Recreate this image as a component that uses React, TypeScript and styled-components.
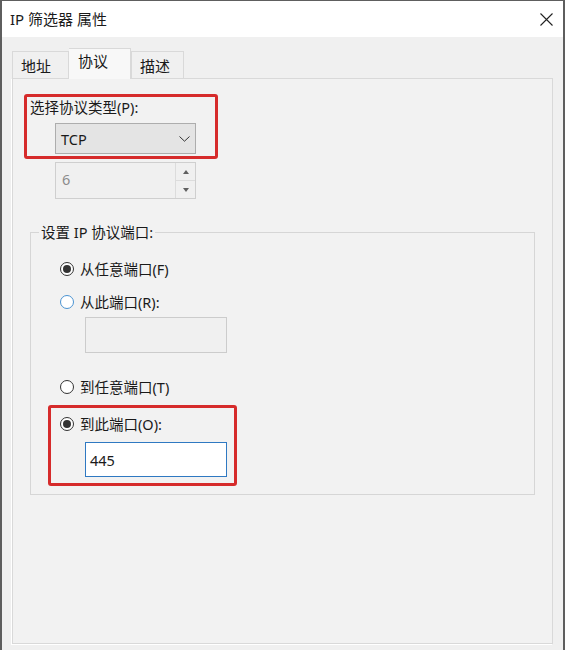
import styled, { createGlobalStyle } from "styled-components";

const GlobalStyle = createGlobalStyle`
  html, body {
    margin: 0;
    padding: 0;
    background: #f0f0f0;
  }
  * {
    box-sizing: border-box;
  }
`;

const Window = styled.div`
  width: 565px;
  height: 650px;
  display: flex;
  flex-direction: column;
  border: 2px solid #5e5e5e;
  border-top-width: 1px;
  border-bottom: none;
  background: #f0f0f0;
  font-family: "Noto Sans", "Noto Sans CJK SC", sans-serif;
  font-size: 14.5px;
  color: #1a1a1a;
`;

const TitleBar = styled.div`
  height: 36px;
  flex-shrink: 0;
  display: flex;
  align-items: center;
  justify-content: space-between;
  padding: 0 10px 0 8px;
  background: #ffffff;
`;

const Title = styled.span`
  font-size: 15px;
  line-height: 20px;
`;

const CloseButton = styled.button`
  width: 14px;
  height: 14px;
  padding: 0;
  border: none;
  background: none;
  display: flex;
  align-items: center;
  justify-content: center;
`;

const Body = styled.div`
  flex: 1;
  display: flex;
  flex-direction: column;
  padding: 11px 10px 6px 10px;
`;

const TabStrip = styled.div`
  display: flex;
  align-items: flex-end;
  height: 31px;
  position: relative;
  z-index: 1;
  margin-bottom: -1px;
`;

const Tab = styled.div<{ $active?: boolean; $width: number }>`
  width: ${(p) => p.$width}px;
  height: ${(p) => (p.$active ? 31 : 28)}px;
  padding: ${(p) => (p.$active ? "2px 0 0 9px" : "4px 0 0 8px")};
  line-height: 20px;
  font-size: 15px;
  border: 1px solid #d9d9d9;
  border-bottom: ${(p) => (p.$active ? "none" : "1px solid #d9d9d9")};
  border-left: ${(p) => (p.$active ? "none" : "1px solid #d9d9d9")};
  background: ${(p) => (p.$active ? "#f8f8f8" : "#f0f0f0")};
`;

const Panel = styled.div`
  flex: 1;
  display: flex;
  flex-direction: column;
  align-items: flex-start;
  border: 1px solid #d9d9d9;
  background: #f2f2f2;
  box-shadow: -1px 1px 0 #ffffff;
`;

const Highlight = styled.div<{ $width: number; $height: number }>`
  width: ${(p) => p.$width}px;
  height: ${(p) => p.$height}px;
  border: 3px solid #d62b2b;
  border-radius: 3px;
`;

const ProtocolBox = styled(Highlight)`
  margin: 15px 0 0 11px;
  padding: 0 0 0 3px;
`;

const Label = styled.div`
  line-height: 20px;
  height: 20px;
  white-space: nowrap;
`;

const Combo = styled.div`
  width: 141px;
  height: 31px;
  margin: 6px 0 0 25px;
  display: flex;
  align-items: center;
  justify-content: space-between;
  padding: 0 5px 0 5px;
  background: #e4e4e4;
  border: 1px solid #adadad;
`;

const Spinner = styled.div`
  width: 141px;
  height: 37px;
  margin: 3px 0 0 42px;
  display: flex;
  border: 1px solid #cfcfcf;
  background: #f0f0f0;
`;

const SpinValue = styled.div`
  flex: 1;
  padding: 6px 0 0 6px;
  line-height: 20px;
  color: #8c8c8c;
`;

const SpinButtons = styled.div`
  width: 20px;
  display: flex;
  flex-direction: column;
  border-left: 1px solid #dcdcdc;
`;

const SpinButton = styled.div<{ $down?: boolean }>`
  flex: 1;
  display: flex;
  align-items: center;
  justify-content: center;
  border-top: ${(p) => (p.$down ? "1px solid #dcdcdc" : "none")};
`;

const Group = styled.fieldset`
  width: 505px;
  margin: 23px 0 0 17px;
  padding: 0 0 8px 0;
  border: 1px solid #d6d6d6;
  min-inline-size: 0;
  display: flex;
  flex-direction: column;
  align-items: flex-start;
`;

const Legend = styled.legend`
  margin-left: 8px;
  padding: 0 2px;
  line-height: 20px;
`;

const RadioRow = styled.label<{ $top: number; $left?: number }>`
  display: flex;
  align-items: center;
  gap: 6px;
  height: 20px;
  margin: ${(p) => p.$top}px 0 0 ${(p) => p.$left ?? 29}px;
  line-height: 20px;
  white-space: nowrap;
`;

const RadioCircle = styled.span<{ $checked?: boolean; $focus?: boolean }>`
  width: 14px;
  height: 14px;
  border-radius: 50%;
  border: 1px solid ${(p) => (p.$focus ? "#4a93d2" : "#333333")};
  background: #ffffff;
  display: flex;
  align-items: center;
  justify-content: center;
  flex-shrink: 0;

  &::after {
    content: "";
    width: 8px;
    height: 8px;
    border-radius: 50%;
    background: ${(p) => (p.$checked ? "#333333" : "transparent")};
  }
`;

const TextBox = styled.div<{ $active?: boolean; $top: number; $left: number; $height: number }>`
  width: 142px;
  height: ${(p) => p.$height}px;
  margin: ${(p) => p.$top}px 0 0 ${(p) => p.$left}px;
  padding: 0 0 0 4px;
  display: flex;
  align-items: center;
  border: 1px solid ${(p) => (p.$active ? "#2f79c2" : "#cccccc")};
  background: ${(p) => (p.$active ? "#ffffff" : "#f0f0f0")};
`;

const PortBox = styled(Highlight)`
  margin: 8px 0 0 17px;
  display: flex;
  flex-direction: column;
  align-items: flex-start;
`;

const Chevron = () => (
  <svg width="11" height="6" viewBox="0 0 11 6">
    <path d="M0.5 0.5 L5.5 5.2 L10.5 0.5" fill="none" stroke="#333" strokeWidth="1" />
  </svg>
);

const Arrow = ({ down }: { down?: boolean }) => (
  <svg width="6" height="4" viewBox="0 0 6 4">
    <path d={down ? "M0 0 L6 0 L3 4 Z" : "M0 4 L6 4 L3 0 Z"} fill="#606060" />
  </svg>
);

const App = () => {
  return (
    <>
      <GlobalStyle />
      <Window>
        <TitleBar>
          <Title>IP 筛选器 属性</Title>
          <CloseButton aria-label="关闭">
            <svg width="13" height="13" viewBox="0 0 13 13">
              <path d="M0.5 0.5 L12.5 12.5 M12.5 0.5 L0.5 12.5" stroke="#222" strokeWidth="1.1" />
            </svg>
          </CloseButton>
        </TitleBar>
        <Body>
          <TabStrip>
            <Tab $width={57}>地址</Tab>
            <Tab $width={62} $active>
              协议
            </Tab>
            <Tab $width={53}>描述</Tab>
          </TabStrip>
          <Panel>
            <ProtocolBox $width={194} $height={65}>
              <Label>选择协议类型(P):</Label>
              <Combo>
                <span>TCP</span>
                <Chevron />
              </Combo>
            </ProtocolBox>
            <Spinner>
              <SpinValue>6</SpinValue>
              <SpinButtons>
                <SpinButton>
                  <Arrow />
                </SpinButton>
                <SpinButton $down>
                  <Arrow down />
                </SpinButton>
              </SpinButtons>
            </Spinner>
            <Group>
              <Legend>设置 IP 协议端口:</Legend>
              <RadioRow $top={17}>
                <RadioCircle $checked />
                从任意端口(F)
              </RadioRow>
              <RadioRow $top={13}>
                <RadioCircle $focus />
                从此端口(R):
              </RadioRow>
              <TextBox $top={5} $left={54} $height={36} />
              <RadioRow $top={24}>
                <RadioCircle />
                到任意端口(T)
              </RadioRow>
              <PortBox $width={189} $height={81}>
                <RadioRow $top={6} $left={9}>
                  <RadioCircle $checked />
                  到此端口(O):
                </RadioRow>
                <TextBox $active $top={8} $left={34} $height={35}>
                  445
                </TextBox>
              </PortBox>
            </Group>
          </Panel>
        </Body>
      </Window>
    </>
  );
};

export default App;
